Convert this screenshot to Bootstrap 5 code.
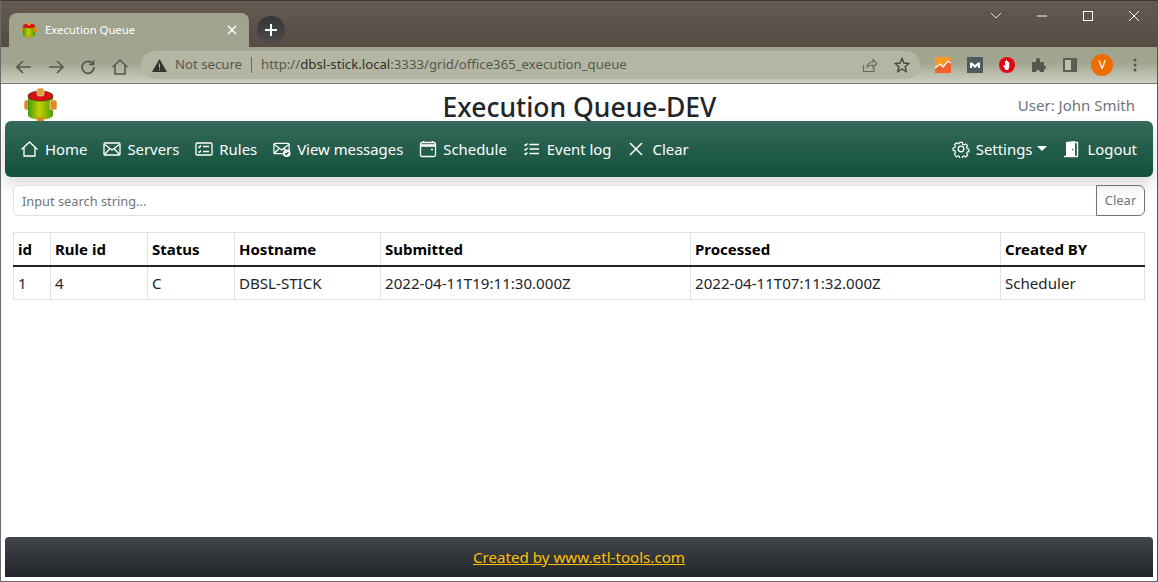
<!DOCTYPE html>
<html lang="en">
<head>
    <meta charset="UTF-8">
    <meta name="viewport" content="width=device-width, initial-scale=1.0">
    <title>Execution Queue</title>
    <link href="https://cdn.jsdelivr.net/npm/bootstrap@5.3.0/dist/css/bootstrap.min.css" rel="stylesheet">
    <style>
        html, body { height: 100%; overflow: hidden; }
        body { font-family: "Noto Sans", "Open Sans", sans-serif; font-size: 16px; color: #212529; }
        .app-window { height: 582px; border: 1px solid #6a6a6a; border-top-color: #3a3a3a; border-right-color: #555; }
        /* browser chrome */
        .tab-strip { height: 46px; flex: none; background: linear-gradient(#655a51, #574c44); padding: 12px 0 0 8px; }
        .tab-active { width: 240px; height: 34px; background: #a0a38d; border-radius: 8px 8px 0 0; padding: 0 12px; color: #fff; font-size: 11.3px; }
        .tab-add { width: 28px; height: 28px; border-radius: 50%; background: linear-gradient(#353535, #4c4c4c); margin: 3px 0 0 8px; }
        .win-controls { margin-left: auto; height: 30px; margin-top: -12px; gap: 30px; padding-right: 17px; }
        .win-controls svg { display: block; }
        .tool-bar { height: 37px; flex: none; background: linear-gradient(#9fa28c 0%, #a3a690 45%, #cdd0c2 100%); border-bottom: 1px solid #77796c; padding-left: 14px; }
        .tool-btn { width: 32px; flex: none; }
        .omni-box { width: 779px; height: 28px; flex: none; margin-left: -2px; background: #b3b6a2; border-radius: 14px; padding: 0 10px 0 11px; font-size: 13.2px; color: #56574d; white-space: nowrap; }
        .omni-sep { width: 1px; height: 16px; background: #6b6c60; margin: 0 9px; }
        .omni-url b { font-weight: 400; color: #2f302a; }
        .ext-row { gap: 16px; margin-left: 15px; }
        .ext-avatar { width: 22px; height: 22px; border-radius: 50%; background: #ef6c00; color: #fff; font-size: 12px; margin-left: -2px; }
        .ext-more { margin-left: 4px; }
        /* page */
        .page-head { height: 37px; flex: none; padding: 0 22px 0 23px; }
        .page-logo { width: 33px; height: 33px; }
        .page-title { font-size: 26.5px; font-weight: 500; margin: 0; color: #212529; line-height: 1; padding-top: 10px; }
        .page-user { color: #6c757d; font-size: 15px; padding-top: 10px; }
        .head-side { width: 150px; }
        .main-nav { margin: 0 4px; height: 56px; flex: none; padding: 0 8px 0 7px; border-radius: 6px; background: linear-gradient(#35695b, #12513b); box-shadow: 0 8px 16px rgba(0, 0, 0, .15); }
        .main-nav .nav-link { color: #fff; padding: 8px; font-size: 14.9px; display: flex; align-items: center; gap: 6px; white-space: nowrap; }
        .main-nav .dropdown-toggle::after { margin-left: -1px; border-top-width: 5px; border-left-width: 5px; border-right-width: 5px; }
        .main-nav svg { flex: none; fill: none; stroke: #fff; stroke-width: 1.3; }
        .main-nav .door-icon { margin-right: 1px; }
        .search-row { margin: 8px 12px 0; }
        .search-row .form-control { font-size: 12.8px; height: 31px; padding-left: 8px; font-family: inherit; }
        .search-row .form-control::placeholder { color: #6c757d; }
        .search-row .btn { font-size: 13px; width: 49px; height: 31px; padding: 0; }
        .table-wrap { margin: 16px 12px 0; }
        .queue-table { table-layout: fixed; width: 1132px; font-size: 15.1px; margin: 0; }
        .queue-table th, .queue-table td { padding: 5px 4px 3px; height: 34px; vertical-align: middle; white-space: nowrap; overflow: hidden; }
        .queue-table thead th { color: #000; font-weight: 700; height: 33px; font-size: 15px; padding-top: 3px; padding-bottom: 3px; }
        .queue-table > :not(caption) > * > * { border-color: #dee2e6; }
        .queue-table > thead > tr > th { border-bottom: 2px solid #212529; }
        .queue-table > tbody { border-top: 0; }
        .col-a { width: 37px; } .col-b { width: 97px; } .col-c { width: 87px; } .col-d { width: 146px; }
        .col-e { width: 310px; } .col-f { width: 310px; }
        .page-foot { margin: auto 4px 4px; height: 40px; flex: none; border-radius: 4px 4px 0 0; background: linear-gradient(#42454b, #212529); font-size: 15.15px; }
        .page-foot a { color: #ffc107; }
    </style>
</head>
<body>
<div class="app-window d-flex flex-column">
    <svg width="0" height="0" class="d-block">
        <defs>
            <linearGradient id="drumBody" x1="0" x2="1" y1="0" y2="0">
                <stop offset="0" stop-color="#3f9a10"/><stop offset=".45" stop-color="#c4d000"/><stop offset="1" stop-color="#4f9a08"/>
            </linearGradient>
        </defs>
    </svg>
    <!-- browser chrome -->
    <div class="tab-strip d-flex">
        <div class="tab-active d-flex align-items-center">
            <svg width="16" height="16" viewBox="0 0 33 33">
                <rect x="0" y="12" width="7" height="9" rx="2" fill="#e08a20"/>
                <rect x="4" y="8" width="25" height="20" fill="url(#drumBody)"/>
                <ellipse cx="16.500" cy="27" rx="12.500" ry="4.500" fill="url(#drumBody)"/>
                <ellipse cx="16.500" cy="8" rx="12.500" ry="5" fill="#d81010"/>
                <rect x="13" y="0" width="7" height="7" rx="2" fill="#e0a040"/>
                <rect x="26" y="12" width="7" height="9" rx="2" fill="#e08a20"/>
                <rect x="13" y="29" width="7" height="4" fill="#e08a20"/>
            </svg>
            <span class="ms-2">Execution Queue</span>
            <svg class="ms-auto" width="10" height="10" viewBox="0 0 10 10" stroke="#fff" stroke-width="1.500"><path d="M1 1l8 8M9 1l-8 8"/></svg>
        </div>
        <div class="tab-add d-flex align-items-center justify-content-center">
            <svg width="14" height="14" viewBox="0 0 14 14" stroke="#fff" stroke-width="2"><path d="M7 1v12M1 7h12"/></svg>
        </div>
        <div class="win-controls d-flex align-items-center">
            <svg width="12" height="8" viewBox="0 0 12 8" fill="none" stroke="#ddd"><path d="M1 1l5 5 5-5"/></svg>
            <svg class="ms-1" width="12" height="2" viewBox="0 0 12 2" stroke="#fff"><path d="M1 1h10"/></svg>
            <svg class="ms-1" width="12" height="12" viewBox="0 0 12 12" fill="none" stroke="#fff"><rect x="1.500" y="1.500" width="9" height="9"/></svg>
            <svg class="ms-1" width="12" height="12" viewBox="0 0 12 12" stroke="#fff"><path d="M1 1l10 10M11 1l-10 10"/></svg>
        </div>
    </div>
    <div class="tool-bar d-flex align-items-center">
        <div class="tool-btn"><svg width="18" height="16" viewBox="0 0 18 16" fill="none" stroke="#55574e" stroke-width="1.700"><path d="M16 8H2M8 2L2 8l6 6"/></svg></div>
        <div class="tool-btn"><svg width="18" height="16" viewBox="0 0 18 16" fill="none" stroke="#55574e" stroke-width="1.700"><path d="M2 8h14M10 2l6 6-6 6"/></svg></div>
        <div class="tool-btn"><svg width="18" height="16" viewBox="0 0 18 16" fill="none" stroke="#55574e" stroke-width="1.700"><path d="M14 5a6 6 0 1 0 1 3"/><path d="M14.500 1v4.500H10" stroke-width="1.500"/></svg></div>
        <div class="tool-btn"><svg width="18" height="18" viewBox="0 0 18 18" fill="none" stroke="#55574e" stroke-width="1.600"><path d="M1.500 9L9 2l7.500 7M4 7.500V16h10V7.500"/></svg></div>
        <div class="omni-box d-flex align-items-center">
            <svg width="15" height="13" viewBox="0 0 15 13"><path d="M7.500 0L15 13H0z" fill="#33342e"/><path d="M7 4.500h1V9H7zM7 10h1v1.200H7z" fill="#b3b6a2"/></svg>
            <span class="ms-2">Not secure</span>
            <span class="omni-sep"></span>
            <span class="omni-url">http://<b>dbsl-stick.local</b>:3333/grid/office365_execution_queue</span>
            <svg class="ms-auto" width="16" height="16" viewBox="0 0 16 16" fill="none" stroke="#6a6b60" stroke-width="1.200"><path d="M1.500 8v6.500h10.500V11M5 10c.5-3 3-5 6-5V2.500l4 4-4 4V8c-2.500 0-4.500.5-6 2z"/></svg>
            <svg class="ms-3" width="16" height="16" viewBox="0 0 16 16" fill="none" stroke="#45463e" stroke-width="1.400"><path d="M8 1.500l2 4.500 4.800.5-3.600 3.200 1 4.800L8 12l-4.200 2.500 1-4.800L1.200 6.500 6 6z"/></svg>
        </div>
        <div class="ext-row d-flex align-items-center">
            <svg width="16" height="16" viewBox="0 0 16 16"><rect width="16" height="16" fill="#fa9a25"/><path d="M0 11l5-4 3 3 6-7 2 1v12H0z" fill="#f4622c"/><path d="M0 11l5-4 3 3 5-6 3 2" fill="none" stroke="#fff" stroke-width="1.300"/></svg>
            <svg width="16" height="16" viewBox="0 0 16 16"><rect width="16" height="16" fill="#4f5a5e"/><path d="M3 11V5.500h2L8 8l3-2.500h2V11h-2V8.500L8 11 5 8.500V11z" fill="#fff"/></svg>
            <svg width="16" height="16" viewBox="0 0 16 16"><circle cx="8" cy="8" r="8" fill="#e30613"/><path d="M4 8.500l1-.5 1 1V4.200h1V3h1v1h1v1h1.200v5l-1 3H6.500z" fill="#fff"/></svg>
            <svg width="16" height="16" viewBox="0 0 16 16"><path d="M1 5h4V3a2 2 0 0 1 4 0v2h4v3.500a2 2 0 0 1 0 4V15H9a2 2 0 0 0-4 0H1z" fill="#55574e"/></svg>
            <svg width="14" height="14" viewBox="0 0 14 14"><rect width="14" height="14" fill="#5c5e54"/><rect x="2" y="2" width="6" height="10" fill="#bcbfae"/></svg>
            <div class="ext-avatar d-flex align-items-center justify-content-center">V</div>
            <svg class="ext-more" width="4" height="14" viewBox="0 0 4 14" fill="#55574e"><circle cx="2" cy="2" r="1.500"/><circle cx="2" cy="7" r="1.500"/><circle cx="2" cy="12" r="1.500"/></svg>
        </div>
    </div>

    <!-- page header -->
    <div class="page-head d-flex justify-content-between">
        <div class="head-side">
            <svg class="page-logo d-block mt-1" viewBox="0 0 33 33">
                <rect x="0" y="12" width="7" height="10" rx="2.500" fill="#e08a20" stroke="#eed" stroke-width=".7"/>
                <rect x="4" y="8" width="25" height="19" fill="url(#drumBody)"/>
                <ellipse cx="16.500" cy="27" rx="12.500" ry="4.500" fill="url(#drumBody)"/>
                <ellipse cx="16.500" cy="8" rx="12.500" ry="5" fill="#d81010" stroke="#401010" stroke-width=".6"/>
                <rect x="13" y="0" width="7" height="8" rx="2" fill="#e0a040" stroke="#eed" stroke-width=".6"/>
                <rect x="26" y="12" width="7" height="10" rx="2.500" fill="#e08a20" stroke="#eed" stroke-width=".7"/>
                <rect x="13" y="29" width="7" height="4" fill="#e08a20"/>
            </svg>
        </div>
        <h1 class="page-title">Execution Queue-DEV</h1>
        <div class="head-side page-user text-end">User: John Smith</div>
    </div>

    <!-- main navigation -->
    <nav class="navbar navbar-expand main-nav">
        <ul class="navbar-nav me-auto">
            <li class="nav-item"><a class="nav-link" href="#"><svg width="19" height="18" viewBox="0 0 18 18"><path d="M1 9.500L9 2l8 7.500M3.500 7.500V16h11V7.500"/></svg>Home</a></li>
            <li class="nav-item"><a class="nav-link" href="#"><svg width="18" height="18" viewBox="0 0 18 18"><rect x="1" y="3" width="16" height="12" rx="1"/><path d="M1 4l8 6 8-6M1 15l6-6.500M17 15l-6-6.500"/></svg>Servers</a></li>
            <li class="nav-item"><a class="nav-link" href="#"><svg width="18" height="18" viewBox="0 0 18 18"><rect x="1" y="3" width="16" height="12" rx="1"/><path d="M8 6.500h6M8 11.500h6M3.500 6.500l1 1 1.500-2M3.500 11.500l1 1 1.500-2"/></svg>Rules</a></li>
            <li class="nav-item"><a class="nav-link" href="#"><svg width="18" height="18" viewBox="0 0 19 18"><rect x="1" y="3" width="16" height="11" rx="1"/><path d="M1 4l8 6 8-6M1 14l6-6M17 14l-6-6"/><circle cx="14.500" cy="13.500" r="4" fill="#fff" stroke="none"/><path d="M12.800 13.500l1.300 1.300 2.200-2.500" stroke="#12513b"/></svg>View messages</a></li>
            <li class="nav-item"><a class="nav-link" href="#"><svg width="18" height="18" viewBox="0 0 18 18"><rect x="1.500" y="2.500" width="15" height="14" rx="1.500"/><path d="M1.500 5.500h15" stroke-width="2.500"/><path d="M4.500 1v2M13.500 1v2M12 9.500h2" stroke-width="1.500"/></svg>Schedule</a></li>
            <li class="nav-item"><a class="nav-link" href="#"><svg width="18" height="18" viewBox="0 0 17 18"><path d="M6 4.500h9.500M6 9h9.500M6 13.500h9.500M1 4.500l1 1 2-2M1 9l1 1 2-2M1 13.500l1 1 2-2"/></svg>Event log</a></li>
            <li class="nav-item"><a class="nav-link" href="#"><svg width="19" height="16" viewBox="0 0 19 16"><path d="M2 2l12 12M14 2L2 14" stroke-width="1.500"/></svg>Clear</a></li>
        </ul>
        <ul class="navbar-nav">
            <li class="nav-item dropdown"><a class="nav-link dropdown-toggle" href="#" role="button" data-bs-toggle="dropdown"><svg width="18" height="18" viewBox="0 0 18 18"><circle cx="9" cy="9" r="2.800"/><path d="M7.500 1.500h3l.4 2.200 1.600.7 1.900-1.200 2.100 2.100-1.200 1.900.7 1.600 2 .4v2.800l-2 .4-.7 1.600 1.200 1.900-2.100 2.100-1.900-1.200-1.600.7-.4 2h-3l-.4-2-1.600-.7-1.900 1.200L1.500 14.500l1.200-1.900-.7-1.600-2-.4V7.800l2-.4.7-1.600-1.200-1.900 2.100-2.100 1.900 1.200 1.600-.7z" transform="translate(1.100 1.100) scale(.88)"/></svg>Settings</a></li>
            <li class="nav-item"><a class="nav-link" href="#"><svg class="door-icon" width="17" height="18" viewBox="0 0 17 18"><path d="M3 16.500V2l9-1v15.500z" fill="#fff" stroke="none"/><path d="M1 16.500h14M12 2.500h2.500v14" /><circle cx="9.500" cy="9.500" r=".8" fill="#12513b" stroke="none"/></svg>Logout</a></li>
        </ul>
    </nav>

    <!-- search -->
    <div class="search-row input-group w-auto">
        <input type="text" class="form-control" placeholder="Input search string...">
        <button class="btn btn-outline-secondary" type="button">Clear</button>
    </div>

    <!-- queue table -->
    <div class="table-wrap">
        <table class="table table-bordered queue-table">
            <thead>
                <tr>
                    <th class="col-a">id</th>
                    <th class="col-b">Rule id</th>
                    <th class="col-c">Status</th>
                    <th class="col-d">Hostname</th>
                    <th class="col-e">Submitted</th>
                    <th class="col-f">Processed</th>
                    <th>Created BY</th>
                </tr>
            </thead>
            <tbody>
                <tr>
                    <td>1</td>
                    <td>4</td>
                    <td>C</td>
                    <td>DBSL-STICK</td>
                    <td>2022-04-11T19:11:30.000Z</td>
                    <td>2022-04-11T07:11:32.000Z</td>
                    <td>Scheduler</td>
                </tr>
            </tbody>
        </table>
    </div>

    <footer class="page-foot d-flex align-items-center justify-content-center">
        <a href="#">Created by www.etl-tools.com</a>
    </footer>
</div>
<script src="https://cdn.jsdelivr.net/npm/bootstrap@5.3.0/dist/js/bootstrap.bundle.min.js"></script>
</body>
</html>
